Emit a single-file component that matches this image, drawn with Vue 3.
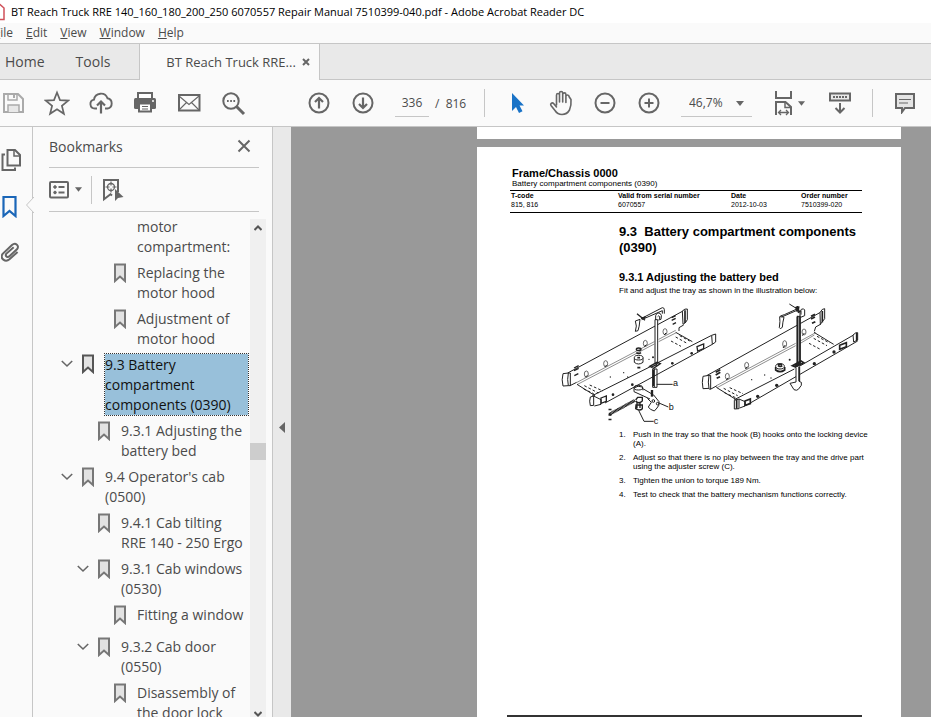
<script setup>
import { ref } from 'vue'

const pageNumber = ref('336')
const zoom = ref('46,7%')
const menus = ['File', 'Edit', 'View', 'Window', 'Help']

const bookmarks = [
  { level: 3, lines: ['motor', 'compartment:'], icon: false },
  { level: 3, lines: ['Replacing the', 'motor hood'], icon: true },
  { level: 3, lines: ['Adjustment of', 'motor hood'], icon: true },
  { level: 1, lines: ['9.3 Battery', 'compartment', 'components (0390)'], icon: true, open: true, selected: true },
  { level: 2, lines: ['9.3.1 Adjusting the', 'battery bed'], icon: true },
  { level: 1, lines: ["9.4 Operator's cab", '(0500)'], icon: true, open: true },
  { level: 2, lines: ['9.4.1 Cab tilting', 'RRE 140 - 250 Ergo'], icon: true },
  { level: 2, lines: ['9.3.1 Cab windows', '(0530)'], icon: true, open: true },
  { level: 3, lines: ['Fitting a window'], icon: true },
  { level: 2, lines: ['9.3.2 Cab door', '(0550)'], icon: true, open: true },
  { level: 3, lines: ['Disassembly of', 'the door lock'], icon: true }
]

const steps = [
  ['Push in the tray so that the hook (B) hooks onto the locking device', '(A).'],
  ['Adjust so that there is no play between the tray and the drive part', 'using the adjuster screw (C).'],
  ['Tighten the union to torque 189 Nm.'],
  ['Test to check that the battery mechanism functions correctly.']
]
</script>

<template>
  <div class="window">
    <header class="titlebar">
      <svg class="app-icon" viewBox="0 0 12 18" aria-hidden="true">
        <path d="M0 1.5h7L11 5v11.5H0" fill="#fff" stroke="#d0505a" stroke-width="1.5" />
        <path d="M0 8q2 3 5 3q2 1 0 2q-3 0-5-3" fill="none" stroke="#d0505a" />
      </svg>
      <span>BT Reach Truck RRE 140_160_180_200_250 6070557 Repair Manual 7510399-040.pdf - Adobe Acrobat Reader DC</span>
    </header>

    <nav class="menubar">
      <button v-for="m in menus" :key="m" type="button"><u>{{ m[0] }}</u>{{ m.slice(1) }}</button>
    </nav>

    <div class="tabs">
      <button type="button" class="tab home">Home</button>
      <button type="button" class="tab tools">Tools</button>
      <div class="tab document-tab">
        <span>BT Reach Truck RRE...</span>
        <button type="button" aria-label="Close tab">
          <svg width="8" height="8" viewBox="0 0 8 8"><path d="M1 1l6 6M7 1l-6 6" stroke="#666" stroke-width="2" /></svg>
        </button>
      </div>
    </div>

    <div class="toolbar">
      <div class="group files">
        <button type="button" class="tool" aria-label="Save">
          <svg width="24" height="24" viewBox="0 0 24 24" fill="none" stroke="#aaa" stroke-width="2">
            <path d="M3 3h14l5 5v13H3z" /><path d="M7 3v6h9V3" stroke-width="1.5" /><path d="M13 4v3" /><path d="M7 21v-7h11v7" fill="#e8e8e8" stroke-width="1.5" />
          </svg>
        </button>
        <button type="button" class="tool" aria-label="Star">
          <svg width="26" height="26" viewBox="0 0 26 26"><path d="M13 2.5l3 7.6 8.2.5-6.3 5.2 2 8L13 19.3l-6.9 4.5 2-8L1.8 10.600l8.200-.5z" fill="none" stroke="#666" stroke-width="1.7" /></svg>
        </button>
        <button type="button" class="tool" aria-label="Upload">
          <svg width="26" height="24" viewBox="0 0 26 24" fill="none" stroke="#666" stroke-width="1.9">
            <path d="M9 17.5H7a4.500 4.500 0 0 1-1-8.900 7 7 0 0 1 13.500-1.300 5.200 5.200 0 0 1 0 10.200H17" /><path d="M13 22.500V11M9 14.500l4-4 4 4" stroke-width="2.2" />
          </svg>
        </button>
        <button type="button" class="tool" aria-label="Print">
          <svg width="24" height="24" viewBox="0 0 24 24">
            <path d="M5 7V2h14v5" fill="#fff" stroke="#666" stroke-width="2" /><rect x="1" y="7" width="22" height="11" rx="1.5" fill="#666" />
            <path d="M6 12.500h12v8H6z" fill="#fff" stroke="#666" stroke-width="2" /><path d="M9 15.500h6M9 18h6" stroke="#666" stroke-width="1.2" /><circle cx="20" cy="10" r="1" fill="#fff" />
          </svg>
        </button>
        <button type="button" class="tool" aria-label="Mail">
          <svg width="24" height="20" viewBox="0 0 24 20" fill="none" stroke="#666">
            <rect x="2" y="2" width="20.500" height="15.500" stroke-width="2" /><path d="M2 3l10 8.500L22 3M2 17l7.500-7.500M22 17l-7.500-7.500" stroke-width="1.1" />
          </svg>
        </button>
        <button type="button" class="tool" aria-label="Find">
          <svg width="26" height="26" viewBox="0 0 26 26" fill="none" stroke="#666">
            <circle cx="11" cy="11" r="7.700" stroke-width="2" /><path d="M16.500 16.500l7.500 7.500" stroke-width="3" /><path d="M7 11h1.700M10.200 11h1.700M13.400 11h1.700" stroke-width="2" />
          </svg>
        </button>
      </div>

      <div class="group paging">
        <button type="button" class="tool" aria-label="Previous page">
          <svg width="22" height="22" viewBox="0 0 22 22" fill="none" stroke="#666" stroke-width="2"><circle cx="11" cy="11" r="9.500" /><path d="M11 16.500V6M7 10l4-4 4 4" stroke-width="2.200" /></svg>
        </button>
        <button type="button" class="tool" aria-label="Next page">
          <svg width="22" height="22" viewBox="0 0 22 22" fill="none" stroke="#666" stroke-width="2"><circle cx="11" cy="11" r="9.500" /><path d="M11 5.500V16M7 12l4 4 4-4" stroke-width="2.200" /></svg>
        </button>
        <input v-model="pageNumber" class="page-input" type="text" aria-label="Page number" />
        <span class="page-total">/&nbsp; 816</span>
      </div>
      <span class="divider"></span>

      <div class="group view">
        <button type="button" class="tool" aria-label="Select">
          <svg width="16" height="22" viewBox="0 0 16 22"><path d="M3 1v18l4-4 3 6 3.500-1.700-3-5.800H15z" fill="#1a73c7" /></svg>
        </button>
        <button type="button" class="tool" aria-label="Pan">
          <svg width="24" height="26" viewBox="0 0 24 26" fill="none" stroke="#666" stroke-width="1.600" stroke-linecap="round" stroke-linejoin="round">
            <path d="M7.500 15V5.200c0-2.200 3-2.200 3 0V12M10.500 5V3.200c0-2.200 3.200-2.200 3.200 0V12M13.700 4.500c0-2.200 3.200-2.200 3.200 0V12.500M16.900 6.500c0-2.200 3.200-2 3.200.2L22 9.500q.5 6-1.500 10.500Q18 24.500 13 24.500q-4.500 0-7-4L2 15.500c-1.200-2 1.300-3.500 2.800-1.800L7.500 17" />
          </svg>
        </button>
        <button type="button" class="tool" aria-label="Zoom out">
          <svg width="22" height="22" viewBox="0 0 22 22" fill="none" stroke="#666" stroke-width="2"><circle cx="11" cy="11" r="9.500" /><path d="M6.500 11h9" /></svg>
        </button>
        <button type="button" class="tool" aria-label="Zoom in">
          <svg width="22" height="22" viewBox="0 0 22 22" fill="none" stroke="#666" stroke-width="2"><circle cx="11" cy="11" r="9.500" /><path d="M6.500 11h9M11 6.500v9" /></svg>
        </button>
        <label class="zoom-box">
          <select v-model="zoom" aria-label="Zoom level"><option>46,7%</option><option>100%</option></select>
          <svg class="caret" width="8" height="5" viewBox="0 0 8 5"><path d="M0 0h8L4 5z" fill="#666" /></svg>
        </label>
        <button type="button" class="tool fit" aria-label="Fit width">
          <svg width="18" height="26" viewBox="0 0 18 26" fill="none" stroke="#666" stroke-width="2">
            <path d="M1 1v7h15V1" /><path d="M1 25V12h9.500l5.500 5v8" /><path d="M10 12v5.500h6" stroke-width="1.500" /><path d="M4 22.500h9M6 20l-2.500 2.500L6 25M11 20l2.500 2.500L11 25" stroke-width="1.300" />
          </svg>
          <svg width="7" height="5" viewBox="0 0 8 5"><path d="M0 0h8L4 5z" fill="#666" /></svg>
        </button>
        <button type="button" class="tool" aria-label="Scrolling">
          <svg width="24" height="22" viewBox="0 0 24 22" fill="none" stroke="#666" stroke-width="2">
            <rect x="2" y="1.500" width="20" height="7" fill="#e8e8e8" /><path d="M5 5h14" stroke-dasharray="2 1" /><path d="M12 11v9.500M7.500 16l4.500 4.500 4.500-4.500" />
          </svg>
        </button>
      </div>
      <span class="divider"></span>
      <button type="button" class="tool comment" aria-label="Comment">
        <svg width="22" height="22" viewBox="0 0 22 22"><path d="M2 2h18v14h-9l-3 4v-4H2z" fill="#e4e4e4" stroke="#666" stroke-width="2" /><path d="M5 7.500h12M5 11h9" stroke="#666" stroke-width="1.200" /></svg>
      </button>
    </div>

    <main class="body">
      <aside class="rail">
        <button type="button" aria-label="Page thumbnails">
          <svg width="20" height="24" viewBox="0 0 20 24" fill="none" stroke="#666" stroke-width="2"><path d="M6.500 2H14l5 5v10.500H6.500z" /><path d="M13 2v6h6" stroke-width="1.500" /><path d="M4 6.500H1.500v15.500H14v-2.500" /></svg>
        </button>
        <button type="button" aria-label="Bookmarks" class="active">
          <svg width="20" height="24" viewBox="0 0 20 24"><path d="M2.500 3h12v19l-6-5-6 5z" fill="none" stroke="#1a66b8" stroke-width="2.200" /></svg>
          <svg class="pointer" width="9" height="16" viewBox="0 0 9 16"><path d="M9 0L1.500 8L9 16" fill="#fafafa" stroke="#c6c6c6" /></svg>
        </button>
        <button type="button" aria-label="Attachments">
          <svg width="20" height="24" viewBox="0 0 20 24" fill="none" stroke="#666" stroke-width="2"><path d="M16.500 11l-7 8.500c-3.500 4-10 .5-7.500-4.500l8-10c3-3.500 8-.5 5.500 3.500L9 16.500c-1.500 2-4.500.5-3.500-2L12 7" transform="rotate(8 10 12)" /></svg>
        </button>
      </aside>

      <section class="panel">
        <div class="panel-head">
          <h2>Bookmarks</h2>
          <button type="button" aria-label="Close panel"><svg width="14" height="14" viewBox="0 0 14 14"><path d="M1.500 1.500l11 11M12.500 1.500l-11 11" stroke="#666" stroke-width="2" /></svg></button>
        </div>
        <div class="panel-tools">
          <button type="button" class="options" aria-label="Options">
            <svg width="20" height="18" viewBox="0 0 20 18" fill="none" stroke="#666"><rect x="1" y="1" width="18" height="15.500" rx="1" stroke-width="2" /><circle cx="6" cy="6" r="1.300" fill="#666" /><circle cx="6" cy="11.500" r="1.300" fill="#666" /><path d="M9.500 6h6M9.500 11.500h6" stroke-width="2" /></svg>
            <svg width="7" height="5" viewBox="0 0 8 5"><path d="M0 0h8L4 5z" fill="#666" /></svg>
          </button>
          <button type="button" class="locate" aria-label="Find current bookmark">
            <svg width="22" height="24" viewBox="0 0 22 24" fill="none" stroke="#666"><path d="M10 17.500l-1.500-1.200-6.500 5V2h14v12" stroke-width="2" /><circle cx="9" cy="9" r="3.500" stroke-width="1.300" /><path d="M9 3.500v4M9 10.500v4M3.500 9h4M10.500 9h4" stroke-width="1.200" /><path d="M13 11v12l3-3 5.500-1z" fill="#666" stroke="none" /></svg>
          </button>
        </div>

        <div class="tree-area">
          <ul class="tree">
            <li v-for="(b, i) in bookmarks" :key="i" :class="['level-' + b.level, { selected: b.selected }]">
              <button v-if="b.open" type="button" class="toggle" aria-label="Collapse">
                <svg width="12" height="8" viewBox="0 0 12 8"><path d="M.8 1l5.200 5L11.200 1" fill="none" stroke="#666" stroke-width="1.600" /></svg>
              </button>
              <span v-else class="toggle"></span>
              <svg v-if="b.icon" class="mark" width="12" height="20" viewBox="0 0 12 20"><path d="M1 1.500h10v16.500L6 13.500 1 18z" fill="#e2e2e2" :stroke="b.selected ? '#555' : '#777'" stroke-width="2" /></svg>
              <span v-else class="mark blank"></span>
              <a href="#"><span v-for="line in b.lines" :key="line">{{ line }}</span></a>
            </li>
          </ul>
          <div class="scrollbar">
            <svg width="8" height="6" viewBox="0 0 8 6"><path d="M.5 5L4 1.500 7.500 5" fill="none" stroke="#555" stroke-width="2" /></svg>
            <span class="thumb"></span>
            <svg width="8" height="6" viewBox="0 0 8 6"><path d="M.5 1L4 4.500 7.500 1" fill="none" stroke="#555" stroke-width="2" /></svg>
          </div>
        </div>
      </section>

      <button type="button" class="collapse" aria-label="Hide navigation pane"><svg width="6" height="11" viewBox="0 0 6 11"><path d="M6 0v11L0 5.500z" fill="#666" /></svg></button>

      <section class="viewer">
        <div class="sheet previous"></div>
        <article class="sheet current">
          <h1>Frame/Chassis 0000</h1>
          <p class="subtitle">Battery compartment components (0390)</p>
          <table>
            <thead><tr><th>T-code</th><th>Valid from serial number</th><th>Date</th><th>Order number</th></tr></thead>
            <tbody><tr><td>815, 816</td><td>6070557</td><td>2012-10-03</td><td>7510399-020</td></tr></tbody>
          </table>
          <div class="column intro">
            <h2>9.3&nbsp; Battery compartment components<br />(0390)</h2>
            <h3>9.3.1 Adjusting the battery bed</h3>
            <p>Fit and adjust the tray as shown in the illustration below:</p>
          </div>

          <svg class="figure" width="310" height="135" viewBox="0 0 930 405" role="img" aria-label="Battery tray before and after adjustment">
            <g fill="none" stroke="#222" stroke-width="3">
              <!-- left tray, rear rail -->
              <path d="M38 234L386 47M45 272L65 262M386 90L372 98V108" />
              <path d="M66 262L298 140M311 133L362 106M66 269L298 147M311 140L364 113" stroke="#555" stroke-width="2" />
              <path d="M24 236q-5 18 0 37l16-1q-4-18 0-38zM40 234h6v38h-6" fill="#fff" />
              <path d="M382 48q8-8 15-6v32q-4 10-13 14z" fill="#fff" /><path d="M390 46v38" stroke-width="5" />
              <!-- left tray, floor -->
              <path d="M66 268L120 302M362 112L412 140" />
              <path d="M88 272l42 22M104 270l40 18M86 282l30 14M362 126l36 20M374 122l30 16M348 138l30 16" stroke-dasharray="8 6" />
              <!-- left tray, front rail -->
              <path d="M112 302L290 213M305 205L470 121M150 324L472 148" />
              <path d="M106 306q-4 12 0 26l10-1v-28zM116 303l22 11v14l-20 5" fill="#fff" />
              <path d="M470 121l12-4v24l-10 7z" fill="#fff" />
              <path d="M138 309l16-6v16l-16 6zM426 155l20-8v14l-18 7z" stroke-width="4" />
              <g fill="#fff" stroke-width="2"><ellipse cx="94" cy="237" rx="6" ry="9" /><ellipse cx="152" cy="206" rx="6" ry="9" /><ellipse cx="271" cy="145" rx="6" ry="9" /><ellipse cx="330" cy="110" rx="6" ry="9" /></g>
              <path d="M91 247l6-6M149 216l6-6M268 155l6-6M327 120l6-6" />
              <path d="M57 219l14-7M57 227l14-7M58 242l12-6M350 68l12-6M350 76l12-6M353 88l10-5" stroke-width="4" />
              <g fill="#222" stroke="none"><circle cx="174" cy="299" r="4" /><circle cx="232" cy="269" r="4" /><circle cx="352" cy="205" r="4" /><circle cx="410" cy="175" r="4" /><circle cx="166" cy="246" r="2" /><circle cx="206" cy="233" r="2" /><circle cx="218" cy="246" r="2" /><circle cx="282" cy="193" r="2" /><circle cx="294" cy="187" r="3" /></g>
              <!-- left tray, bushing, hook and bar -->
              <path d="M238 188v14q12 10 26 0v-14" fill="#fff" /><ellipse cx="251" cy="188" rx="13" ry="7" fill="#fff" /><path d="M247 188h8" stroke-width="5" />
              <ellipse cx="251" cy="163" rx="7" ry="4" stroke-width="4" /><path d="M244 173q7 5 14 0M247 218h9" stroke-width="5" />
              <path d="M300 74v132h8V74zM302 75V62q3-10 13-7 7 4 3 18l-8 2M308 65q3-5 6 0v7" fill="#fff" />
              <path d="M284 214l22-12 10 4-20 14zM290 216l16-8" stroke-width="4" />
              <path d="M293 222h13v55h-13zM298 222v54" /><path d="M295 225v48" stroke-width="5" />
              <path d="M264 68L322 38q6 0 6 6v12M260 74l62-27v9M241 78l14-5q-2 24-6 34l-8 2q6-16 0-31" />
              <path d="M246 56l24 20M258 70l14-4" stroke-width="4" />
              <!-- locking device -->
              <path d="M237 279q12-9 25-3l2 10M237 280v10l48 22M262 280l34 20 16 20q2 12-6 19l-8 9q-14-4-18-12l9-14-12-12" />
              <ellipse cx="250" cy="278" rx="13" ry="7" /><path d="M291 285v20" stroke-width="7" /><circle cx="295" cy="318" r="4" /><circle cx="308" cy="326" r="4" />
              <path d="M163 358L240 316" stroke="#111" stroke-width="9" stroke-dasharray="3 1" />
              <path d="M242 315l6-8h14v11l-7 5v16M242 318q7 9 18 2M242 341q12 8 20 0v-11h-19zM246 323v17M255 323v16" stroke-width="4" />
              <path d="M165 341v5M165 356v6M165 371v5" stroke-width="9" />
              <path d="M305 268h48M312 324l28 12M251 346l16 33h29" />

              <!-- right tray, rear rail -->
              <path d="M455 242L798 51M466 283L486 272M798 87L782 96L778 109" />
              <path d="M486 271L722 145M736 138L782 113M486 278L722 152M736 145L778 120" stroke="#555" stroke-width="2" />
              <path d="M444 244q-4 18 0 37l18-1q-4-18 0-39zM462 241h5v41h-5" fill="#fff" />
              <path d="M795 53q6-13 14-12v30l-13 17z" fill="#fff" /><path d="M802 48v34" stroke-width="5" />
              <!-- right tray, floor and front rail -->
              <path d="M484 277l58 36M777 112l59 36M538 314L718 222M733 214L894 121M572 332L908 138" />
              <path d="M506 280l42 22M524 278l40 18M508 293l36 16M776 130l40 22M786 124l38 20M762 145l34 18" stroke-dasharray="8 6" />
              <path d="M538 316v26l14-1v-29zM552 312l18 8v13l-16 6M894 120q10-10 14-7v22l-12 6z" fill="#fff" /><path d="M545 314v27M905 114v23" stroke-width="5" />
              <path d="M570 318l16-6v14l-16 5zM854 151l20-8v12l-20 8z" stroke-width="5" />
              <g fill="#fff" stroke-width="2"><ellipse cx="517" cy="244" rx="6" ry="9" /><ellipse cx="575" cy="211" rx="6" ry="9" /><ellipse cx="689" cy="147" rx="6" ry="10" /><ellipse cx="747" cy="111" rx="6" ry="9" /></g>
              <path d="M514 255l5-6M571 222l6-7M684 159l7-9M742 122l6-8" />
              <path d="M482 232l14-8M482 240l14-8M485 250l10-5M768 64l12-6M768 72l12-6M771 85l10-5" stroke-width="5" />
              <g fill="#222" stroke="none"><circle cx="608" cy="304" r="5" /><circle cx="665" cy="271" r="5" /><circle cx="778" cy="206" r="5" /><circle cx="837" cy="171" r="5" /><circle cx="590" cy="254" r="2" /><circle cx="629" cy="240" r="2" /><circle cx="648" cy="249" r="2" /><circle cx="704" cy="194" r="3" /></g>
              <ellipse cx="675" cy="214" rx="13" ry="8" fill="#fff" /><path d="M662 216v9q13 10 27 0v-9M669 212q7 5 13 0M668 208h13" stroke-width="5" />
              <path d="M726 65v139h9V65z" fill="#fff" /><path d="M728 62v145M735 62v145" stroke-width="5" />
              <path d="M735 63q-2-14 4-20 8-4 10 2v17l-12 5M738 47v12" />
              <path d="M712 212l26-14 8 5-24 13zM720 213l16-8" stroke-width="5" />
              <path d="M723 218v43l-18 4 12 19q8 4 13-1l9-12v-9l-7-3v-45" fill="#fff" /><path d="M733 216v42" stroke-width="5" />
              <path d="M676 63l12-4 40-18M680 66l46-20M674 65q10 0 13 2-4 14-5 30l-6 4-3-3q3-20 1-33M703 27l24 15" />
              <path d="M723 35l10 18M730 34l-3 16" stroke-width="8" />
            </g>
            <g class="figure-labels"><text x="354" y="272">a</text><text x="341" y="346">b</text><text x="296" y="388">c</text></g>
          </svg>

          <ol class="column steps">
            <li v-for="(s, i) in steps" :key="i"><span>{{ i + 1 }}.</span><p><span v-for="line in s" :key="line">{{ line }}</span></p></li>
          </ol>
          <div class="foot-rule"></div>
        </article>
      </section>
    </main>
  </div>
</template>

<style>
body { margin: 0; overflow: hidden; }
</style>

<style scoped>
* { box-sizing: border-box; }
.window { height: 100vh; display: flex; flex-direction: column; overflow: hidden; background: #fafafa; color: #4b4b4b; font-family: "Open Sans", "Noto Sans", sans-serif; font-size: 14px; }
button { border: 0; padding: 0; margin: 0; background: none; color: inherit; font: inherit; display: flex; align-items: center; justify-content: center; flex: none; }
svg { display: block; flex: none; }
h1, h2, h3, p, ul, ol { margin: 0; padding: 0; list-style: none; }

.titlebar { flex: none; height: 23px; display: flex; align-items: center; background: #fff; color: #000; font-size: 11px; white-space: nowrap; }
.app-icon { width: 12px; height: 18px; margin-left: -7px; margin-right: 6px; }
.menubar { flex: none; height: 20px; display: flex; gap: 13px; margin-left: -6px; font-size: 12px; }
.menubar button { height: 19px; }

.tabs { flex: none; height: 37px; display: flex; background: #e9e9e9; border-top: 1px solid #c6c6c6; border-bottom: 1px solid #c6c6c6; }
.tab { padding: 0 5px; }
.tools { margin-left: 21px; }
.document-tab { width: 181px; height: 36px; margin-left: 24px; padding: 0 9px 0 26px; display: flex; align-items: center; justify-content: space-between; background: #fafafa; border-left: 1px solid #c6c6c6; border-right: 1px solid #c6c6c6; font-size: 13px; white-space: nowrap; }

.toolbar { flex: none; height: 47px; display: flex; align-items: center; border-bottom: 1px solid #c6c6c6; font-size: 12px; }
.group { display: flex; align-items: center; flex: none; }
.files { margin-left: -9px; }
.paging { margin-left: 42px; }
.tool { width: 44px; height: 40px; }
.page-input { width: 34px; height: 28px; margin-left: 10px; border: 0; border-bottom: 1px solid #c6c6c6; background: none; color: inherit; font: inherit; padding: 0; text-align: center; outline: 0; }
.page-total { width: 39px; margin-left: 6px; white-space: nowrap; }
.divider { width: 1px; height: 28px; margin: 0 10px; background: #c6c6c6; flex: none; }
.zoom-box { position: relative; width: 71px; height: 28px; margin-left: 10px; }
.zoom-box select { appearance: none; width: 100%; height: 100%; border: 0; border-bottom: 1px solid #c6c6c6; background: none; color: inherit; font: inherit; padding: 0 8px; border-radius: 0; outline: 0; }
.caret { position: absolute; right: 8px; top: 12px; pointer-events: none; }
.fit { width: 66px; gap: 5px; padding-left: 10px; }

.body { flex: 1; min-height: 0; display: flex; }
.rail { flex: none; width: 33px; padding-top: 10px; border-right: 1px solid #c6c6c6; display: flex; flex-direction: column; }
.rail button { position: relative; width: 33px; height: 46px; padding-left: 1px; justify-content: flex-start; }
.pointer { position: absolute; right: -1px; top: 14px; }
.panel { flex: none; width: 240px; padding-left: 16px; display: flex; flex-direction: column; border-right: 1px solid #c6c6c6; }
.panel-head { height: 41px; margin-right: 13px; padding-right: 8px; padding-bottom: 2px; display: flex; align-items: center; justify-content: space-between; border-bottom: 1px solid #c6c6c6; }
.panel-head h2 { font-size: 14px; font-weight: 400; }
.panel-tools { flex: none; height: 44px; margin-right: 13px; display: flex; align-items: center; border-bottom: 1px solid #c6c6c6; }
.options { gap: 6px; padding-right: 9px; height: 28px; border-right: 1px solid #c6c6c6; }
.locate { margin-left: 10px; }
.tree-area { flex: 1; min-height: 0; display: flex; justify-content: space-between; padding-right: 6px; }
.tree { flex: 1; min-width: 0; padding-top: 2px; }
.tree li { display: flex; min-height: 32px; line-height: 20px; white-space: nowrap; padding: 3px 2px 3px 0; }
.level-1 { margin-left: 12px; }
.level-2 { margin-left: 28px; }
.level-3 { margin-left: 44px; }
.toggle { width: 12px; height: 20px; flex: none; }
.mark { margin-left: 9px; width: 12px; flex: none; }
.tree a { color: inherit; text-decoration: none; margin-left: 11px; flex: 1; }
.tree a span { display: block; }
.tree .selected { padding-top: 2px; }
.selected a { padding-top: 1px; background: #98c0da; color: #111; outline: 1px dotted #333; }
.scrollbar { width: 16px; flex: none; margin-top: 7px; padding-top: 6px; background: #f0f0f0; display: flex; flex-direction: column; align-items: center; }
.thumb { width: 16px; height: 17px; margin-top: 212px; margin-bottom: auto; background: #cdcdcd; }
.collapse { width: 18px; background: #e9e9e9; padding-top: 11px; }

.viewer { flex: 1; min-width: 0; background: #999; padding: 0 30px 0 186px; display: flex; flex-direction: column; }
.sheet { background: #fff; }
.previous { height: 12px; flex: none; }
.current { flex: 1; min-height: 0; margin-top: 8px; padding: 20px 39px 0 33px; display: flex; flex-direction: column; color: #000; font-family: "Liberation Sans", sans-serif; font-size: 8px; line-height: 9px; white-space: nowrap; }
.current h1 { font-size: 11px; line-height: 12px; padding-left: 2px; }
.subtitle { font-size: 8px; line-height: 10px; padding-left: 2px; margin-bottom: 1px; }
.current table { width: 100%; font-size: 7px; border-collapse: collapse; table-layout: fixed; border-top: 1px solid #000; border-bottom: 1px solid #000; text-align: left; }
.current th, .current td { padding: 0 0 0 1px; height: 9px; line-height: 9px; }
.current td { padding-bottom: 3px; }
.current th:nth-child(1) { width: 107px; }
.current th:nth-child(2) { width: 113px; }
.current th:nth-child(3) { width: 70px; }
.column { margin-left: 109px; }
.current h2 { font-size: 13px; line-height: 16px; margin-top: 11px; }
.current h3 { font-size: 11px; line-height: 14px; margin-top: 14px; margin-bottom: 2px; }
.figure { margin-left: 45px; }
.figure-labels { font: 27px "Liberation Sans", sans-serif; fill: #111; }
.steps { display: grid; gap: 5px; }
.steps li { display: flex; }
.steps li > span { width: 14px; flex: none; }
.steps p span { display: block; }
.foot-rule { margin-top: auto; height: 2px; background: #333; margin-left: -3px; flex: none; }
</style>
